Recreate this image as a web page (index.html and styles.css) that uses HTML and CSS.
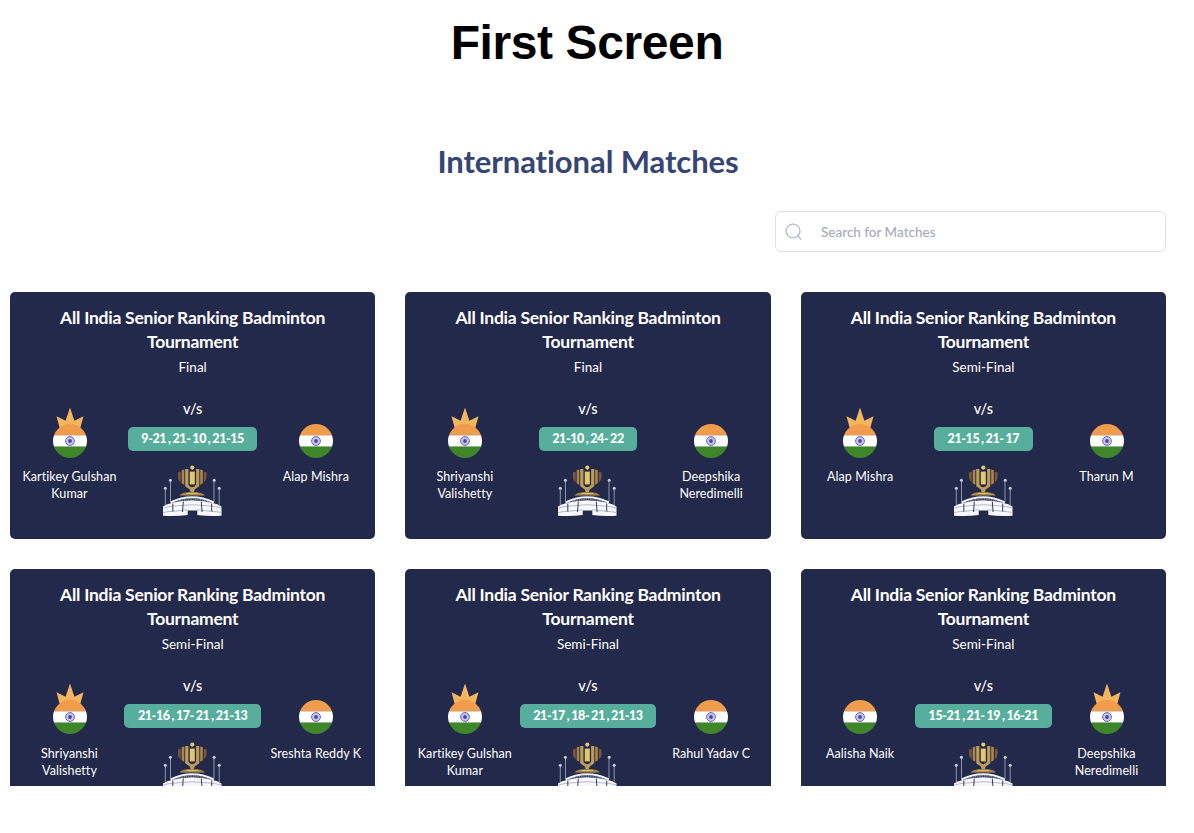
FILE: index.html
```html
<!DOCTYPE html>
<html lang="en">
<head>
<meta charset="utf-8">
<title>International Matches</title>
<link rel="stylesheet" href="styles.css">
</head>
<body>
<svg class="sprite" aria-hidden="true">
  <symbol id="flag" viewBox="0 0 34 50">
    <clipPath id="disc"><circle cx="17" cy="33" r="17"/></clipPath>
    <g clip-path="url(#disc)">
      <rect y="16" width="34" height="11.5" fill="#f19c4b"/>
      <rect y="27.3" width="34" height="11.5" fill="#fff"/>
      <rect y="38.6" width="34" height="12" fill="#3f8529"/>
    </g>
    <circle cx="17" cy="33" r="4.4" fill="#c9c8ec" stroke="#6661ba" stroke-width="1"/>
    <circle cx="17" cy="33" r="1.9" fill="#4a45a8"/>
  </symbol>
  <symbol id="crown" viewBox="0 0 34 50">
    <path d="M17 -.5l4.400 13.300 9.100-4.600-3.500 12.800H7L3.500 8.200l9.100 4.600z" fill="#f3b65f"/>
  </symbol>
  <symbol id="trophy" viewBox="0 0 60 54">
    <g fill="none" stroke="#8f94ae" stroke-width="1">
      <path d="M8.500 17v20M3.300 25v16M52 17v20M57.200 25v16"/>
    </g>
    <g fill="#c9ccdb"><circle cx="8.400" cy="16.300" r="1.500"/><circle cx="3.300" cy="24.300" r="1.500"/><circle cx="52.200" cy="16.300" r="1.500"/><circle cx="57.200" cy="24.300" r="1.500"/></g>
    <g fill="#ad8748">
      <path d="M16 8.500l2.700-.8v10.600q-2.700-1.600-2.700-5z" fill="#80563a"/>
      <path d="M44.500 8.500l-2.700-.8v10.600q2.700-1.600 2.700-5z" fill="#80563a"/>
      <path d="M19.700 6.200l2.600-.7v15.300l-2.600-1.600zM40.800 6.200l-2.600-.7v15.300l2.600-1.600z"/>
      <path d="M23.200 5h3.200v15.500q1 2.500 3.800 2.700 2.900-.2 3.900-2.700V5h3.200v17.200l-4.600 3.200-.9 3h-3.100l-.9-3-4.600-3.200z" fill="#bd9b58"/>
      <path d="M17.500 31.500q1.500-2.800 10-3.200h5.400q8.500.4 10 3.200z"/>
      <path d="M24.500 29.400h11.500" stroke="#dcc36a" stroke-width="1"/>
    </g>
    <g fill="#e2c96b"><circle cx="30.300" cy="3.600" r="2.100"/><rect x="27.800" y="7.600" width="5" height="12.800"/></g>
    <path d="M8.500 38.500q21.700-10.500 43.400 0" fill="none" stroke="#f1f2f6" stroke-width="2"/>
    <path d="M10 39.500q20.300-9 40.500 0" fill="none" stroke="#8b90aa" stroke-width="1.500" stroke-dasharray="1 .8"/>
    <path d="M1 42.500q4-3 9-3.500 20-5.500 40.500 0 5 .5 9 3.500v9.200q-12 1-24.200-.7v-4.500h-9.600V51q-12 1.700-24.700.7z" fill="#f7f8fb"/>
    <path d="M1 48.500q5-1 10-1.200l14.500-1.500M59.500 48.500q-5-1-10-1.200l-14.500-1.500M1.500 44q4-1.200 9-1.800 20-3 39.500 0 5 .6 9 1.800" fill="none" stroke="#a3a7bc" stroke-width=".8"/>
    <path d="M10.800 39.500v8M21.300 37.500l-.8 10.500M39.300 37.500l.8 10.500M49.700 39.500v8" fill="none" stroke="#343a60" stroke-width="1"/>
  </symbol>
</svg>
<main class="page">
  <h1 class="page-title">First Screen</h1>
  <h2 class="section-title">International Matches</h2>
  <label class="search">
    <svg class="search-icon" viewBox="0 0 18 18"><circle cx="8" cy="8" r="6.900"/><path d="M12.800 12.800l3 3.300"/></svg>
    <input class="search-input" type="text" placeholder="Search for Matches">
  </label>
  <section class="matches" id="matches"></section>
</main>
<script src="matches.js"></script>
</body>
</html>
```

FILE: matches.js
```js
const title = 'All India Senior Ranking Badminton Tournament';
const matches = [
  { stage: 'Final', score: '9-21 , 21- 10 , 21-15', players: ['Kartikey Gulshan Kumar', 'Alap Mishra'], winner: 0 },
  { stage: 'Final', score: '21-10 , 24- 22', players: ['Shriyanshi Valishetty', 'Deepshika Neredimelli'], winner: 0 },
  { stage: 'Semi-Final', score: '21-15 , 21- 17', players: ['Alap Mishra', 'Tharun M'], winner: 0 },
  { stage: 'Semi-Final', score: '21-16 , 17- 21 , 21-13', players: ['Shriyanshi Valishetty', 'Sreshta Reddy K'], winner: 0 },
  { stage: 'Semi-Final', score: '21-17 , 18- 21 , 21-13', players: ['Kartikey Gulshan Kumar', 'Rahul Yadav C'], winner: 0 },
  { stage: 'Semi-Final', score: '15-21 , 21- 19 , 16-21', players: ['Aalisha Naik', 'Deepshika Neredimelli'], winner: 1 },
];

const player = (m, i) => `
  <div class="player">
    <svg class="flag" viewBox="0 0 34 50">${m.winner === i ? '<use href="#crown"/>' : ''}<use href="#flag"/></svg>
    <span class="player-name">${m.players[i]}</span>
  </div>`;

document.getElementById('matches').innerHTML = matches.map(m => `
  <article class="card">
    <h3 class="card-title">${title}</h3>
    <p class="stage">${m.stage}</p>
    <div class="versus">
      ${player(m, 0)}
      <div class="result">
        <span class="vs">v/s</span>
        <span class="score">${m.score}</span>
        <svg class="trophy"><use href="#trophy"/></svg>
      </div>
      ${player(m, 1)}
    </div>
  </article>`).join('');
```

FILE: styles.css
```css
* { box-sizing: border-box; }
body {
  margin: 0;
  background: #fff;
  font-family: Lato, "Liberation Sans", sans-serif;
  font-variant-ligatures: none;
  overflow: hidden;
}
h1, h2, h3, p { margin: 0; }
.sprite { position: absolute; width: 0; height: 0; }
.page {
  display: flex;
  flex-direction: column;
  width: 1166px;
  height: 785.5px;
  padding-left: 10px;
  overflow: hidden;
}
.page-title {
  padding-top: 15px;
  margin-left: -2px;
  text-align: center;
  font: bold 48px/55px "Liberation Sans", Arial, sans-serif;
  letter-spacing: -.4px;
  color: #000;
}
.section-title {
  margin-top: 71px;
  text-align: center;
  font-size: 31px;
  line-height: 40px;
  font-weight: 700;
  letter-spacing: -.08px;
  color: #364574;
}
.search {
  display: flex;
  flex: none;
  align-items: center;
  align-self: flex-end;
  width: 391px;
  height: 41px;
  margin-top: 30px;
  padding-left: 9px;
  border: 1.5px solid #dcdfea;
  border-radius: 6px;
}
.search-icon {
  width: 18px;
  height: 18px;
  fill: none;
  stroke: #b4bbcd;
  stroke-width: 1.4;
  stroke-linecap: round;
}
.search-input {
  flex: 1;
  margin-left: 18px;
  padding: 0;
  border: 0;
  outline: 0;
  font: 500 13.500px/20px Lato, sans-serif;
}
.search-input::placeholder { color: #a5abb7; opacity: 1; }
.matches {
  display: grid;
  grid-template-columns: repeat(3, minmax(0, 1fr));
  grid-auto-rows: 246.500px;
  gap: 30px;
  margin-top: 40px;
}
.card {
  padding: 14px 10px 0;
  border-radius: 5px;
  background: #23294b;
  color: #fff;
  text-align: center;
}
.card-title {
  padding: 0 30px;
  font-size: 17.500px;
  line-height: 24px;
  font-weight: 700;
  letter-spacing: -.25px;
}
.stage { margin-top: 3px; font-size: 13.500px; line-height: 20px; }
.versus { display: flex; justify-content: space-between; margin-top: 23px; }
.player { display: flex; flex: none; flex-direction: column; align-items: center; width: 99px; padding-top: 7.500px; }
.flag { width: 34px; height: 50px; overflow: visible; }
.player-name { margin-top: 10.500px; font-size: 12.500px; line-height: 17px; letter-spacing: .08px; }
.result { display: flex; flex-direction: column; align-items: center; }
.vs { font-size: 14.500px; line-height: 18px; font-weight: 500; }
.score {
  height: 24px;
  margin-top: 9px;
  padding: 0 13.500px;
  border-radius: 5px;
  background: #57ae9c;
  font-size: 12.500px;
  line-height: 24px;
  font-weight: 900;
  letter-spacing: -.4px;
  word-spacing: -.7px;
  white-space: nowrap;
}
.trophy { width: 60px; height: 54px; margin: 13px 1px 0 0; }
```
